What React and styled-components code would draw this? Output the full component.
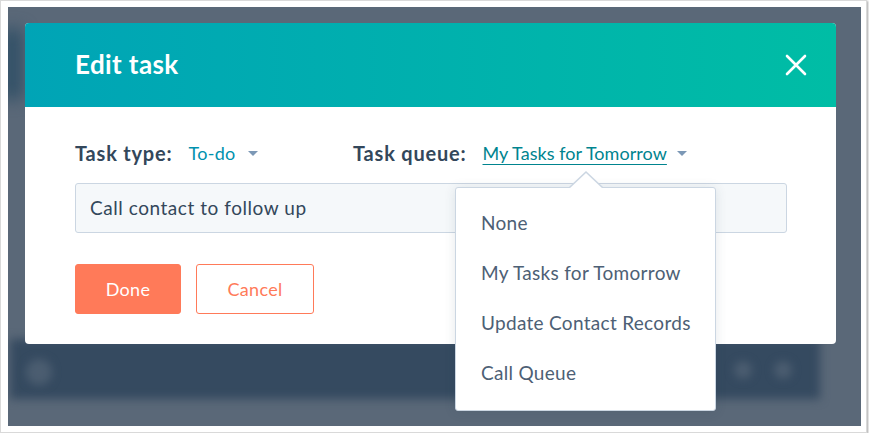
import React from "react";
import styled, { createGlobalStyle } from "styled-components";

const GlobalStyle = createGlobalStyle`
  html, body {
    margin: 0;
    padding: 0;
    background: #ffffff;
  }
  * {
    box-sizing: border-box;
  }
`;

const Frame = styled.div`
  width: 867px;
  height: 433px;
  padding: 6px 0 0 7px;
  background: #ffffff;
  border: 1px solid #d9d9d9;
  box-shadow: 1px 1px 2px rgba(0, 0, 0, 0.35);
  font-family: Lato, "Open Sans", sans-serif;
`;

const Screen = styled.div`
  position: relative;
  width: 853px;
  height: 419px;
  padding: 16px 25px 0 17px;
  background: #5a6878;
  overflow: hidden;
`;

// blurred page that sits behind the modal
const BlurredCard = styled.div`
  position: absolute;
  left: 2px;
  top: 332px;
  width: 810px;
  height: 60px;
  background: #354a60;
  filter: blur(5px);
`;

const BlurredSide = styled.div`
  position: absolute;
  left: -6px;
  top: 22px;
  width: 20px;
  height: 70px;
  background: #2f4f66;
  filter: blur(8px);
`;

const BlurDot = styled.div`
  position: absolute;
  top: ${(p) => p.top}px;
  left: ${(p) => p.left}px;
  width: ${(p) => p.size}px;
  height: ${(p) => p.size}px;
  border-radius: 50%;
  background: #4b5d70;
  filter: blur(4px);
`;

const Modal = styled.div`
  position: relative;
  width: 811px;
  background: #ffffff;
  border-radius: 4px;
`;

const Header = styled.div`
  height: 84px;
  display: flex;
  align-items: center;
  justify-content: space-between;
  padding: 0 29px 0 50px;
  border-radius: 4px 4px 0 0;
  background: linear-gradient(90deg, #00a4b6 0%, #00bda5 100%);
`;

const Title = styled.h1`
  margin: 0 0 2px;
  color: #ffffff;
  font-size: 26px;
  font-weight: 700;
  letter-spacing: 0.4px;
`;

const CloseButton = styled.button`
  display: flex;
  padding: 0;
  border: 0;
  background: none;
  cursor: pointer;
`;

const Body = styled.div`
  padding: 34px 49px 30px 50px;
`;

const FieldRow = styled.div`
  display: flex;
  align-items: center;
  height: 24px;
`;

const Field = styled.div`
  position: relative;
  display: flex;
  align-items: center;
  width: ${(p) => (p.width ? `${p.width}px` : "auto")};
`;

const Label = styled.span`
  color: #33475b;
  font-size: 20px;
  font-weight: 700;
  letter-spacing: 0.8px;
  margin-right: 16px;
`;

const Value = styled.span`
  color: ${(p) => (p.link ? "#00848f" : "#0091ae")};
  font-size: 18px;
  letter-spacing: ${(p) => (p.link ? "0.05px" : "0.3px")};
  text-decoration: ${(p) => (p.link ? "underline" : "none")};
  text-underline-offset: 4px;
  text-decoration-thickness: 1px;
`;

const Caret = styled.span`
  width: 0;
  height: 0;
  margin-left: ${(p) => p.gap}px;
  border-left: 5px solid transparent;
  border-right: 5px solid transparent;
  border-top: 5px solid #7c98b6;
`;

const TextInput = styled.div`
  margin-top: 18px;
  height: 50px;
  display: flex;
  align-items: center;
  padding: 0 14px 2px;
  background: #f5f8fa;
  border: 1px solid #cbd6e2;
  border-radius: 3px;
  color: #33475b;
  font-size: 19px;
  letter-spacing: 0.55px;
`;

const Actions = styled.div`
  display: flex;
  gap: 15px;
  margin-top: 31px;
`;

const Button = styled.button`
  height: 50px;
  width: ${(p) => p.width}px;
  border-radius: 3px;
  border: 1px solid #ff7a59;
  background: ${(p) => (p.primary ? "#ff7a59" : "#ffffff")};
  color: ${(p) => (p.primary ? "#ffffff" : "#ff7a59")};
  font-family: inherit;
  font-size: 18px;
  letter-spacing: 0.3px;
  cursor: pointer;
`;

const Dropdown = styled.ul`
  position: absolute;
  top: 46px;
  left: 102px;
  width: 261px;
  margin: 0;
  padding: 9px 0 13px;
  list-style: none;
  background: #ffffff;
  border: 1px solid #cbd6e2;
  border-radius: 3px;
  box-shadow: 0 1px 12px rgba(45, 62, 80, 0.12);
  z-index: 2;

  &::before,
  &::after {
    content: "";
    position: absolute;
    left: 113px;
    width: 0;
    height: 0;
    border-left: 17px solid transparent;
    border-right: 17px solid transparent;
  }
  &::before {
    top: -17px;
    border-bottom: 16px solid #cbd6e2;
  }
  &::after {
    top: -15px;
    border-bottom: 16px solid #ffffff;
  }
`;

const Option = styled.li`
  height: 50px;
  display: flex;
  align-items: center;
  padding-left: 25px;
  color: #4d6075;
  font-size: 19px;
  letter-spacing: 0.3px;
`;

const queues = [
  "None",
  "My Tasks for Tomorrow",
  "Update Contact Records",
  "Call Queue",
];

export default function App() {
  return (
    <>
      <GlobalStyle />
      <Frame>
        <Screen>
          <BlurredSide />
          <BlurredCard />
          <BlurDot top={352} left={18} size={26} />
          <BlurDot top={354} left={726} size={18} />
          <BlurDot top={354} left={766} size={18} />

          <Modal>
            <Header>
              <Title>Edit task</Title>
              <CloseButton aria-label="Close">
                <svg width="22" height="22" viewBox="0 0 22 22">
                  <path
                    d="M2 2 L20 20 M20 2 L2 20"
                    stroke="#ffffff"
                    strokeWidth="2.6"
                    strokeLinecap="round"
                  />
                </svg>
              </CloseButton>
            </Header>

            <Body>
              <FieldRow>
                <Field width={278}>
                  <Label>Task type:</Label>
                  <Value>To-do</Value>
                  <Caret gap={12} />
                </Field>
                <Field>
                  <Label>Task queue:</Label>
                  <Value link>My Tasks for Tomorrow</Value>
                  <Caret gap={10} />
                  <Dropdown>
                    {queues.map((q) => (
                      <Option key={q}>{q}</Option>
                    ))}
                  </Dropdown>
                </Field>
              </FieldRow>

              <TextInput>Call contact to follow up</TextInput>

              <Actions>
                <Button primary width={106}>Done</Button>
                <Button width={118}>Cancel</Button>
              </Actions>
            </Body>
          </Modal>
        </Screen>
      </Frame>
    </>
  );
}
